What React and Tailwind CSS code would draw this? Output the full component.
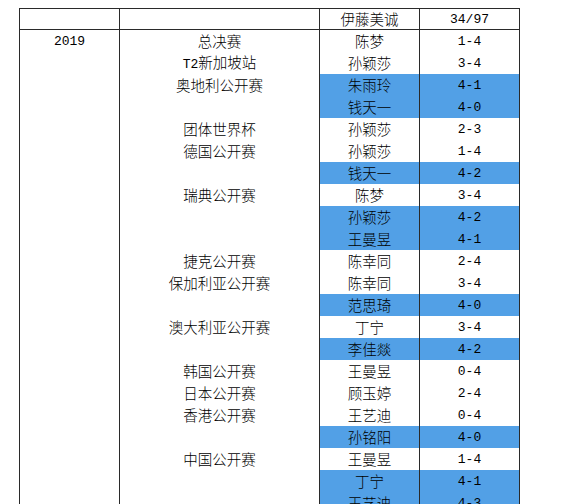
import React from "react";

const rows = [
  ["总决赛", "陈梦", "1-4", false],
  ["T2新加坡站", "孙颖莎", "3-4", false],
  ["奥地利公开赛", "朱雨玲", "4-1", true],
  ["", "钱天一", "4-0", true],
  ["团体世界杯", "孙颖莎", "2-3", false],
  ["德国公开赛", "孙颖莎", "1-4", false],
  ["", "钱天一", "4-2", true],
  ["瑞典公开赛", "陈梦", "3-4", false],
  ["", "孙颖莎", "4-2", true],
  ["", "王曼昱", "4-1", true],
  ["捷克公开赛", "陈幸同", "2-4", false],
  ["保加利亚公开赛", "陈幸同", "3-4", false],
  ["", "范思琦", "4-0", true],
  ["澳大利亚公开赛", "丁宁", "3-4", false],
  ["", "李佳燚", "4-2", true],
  ["韩国公开赛", "王曼昱", "0-4", false],
  ["日本公开赛", "顾玉婷", "2-4", false],
  ["香港公开赛", "王艺迪", "0-4", false],
  ["", "孙铭阳", "4-0", true],
  ["中国公开赛", "王曼昱", "1-4", false],
  ["", "丁宁", "4-1", true],
  ["", "王艺迪", "4-3", true],
];

const cjk = "font-['Noto_Sans_CJK_SC',sans-serif] text-[14.5px] font-light";
const mono = "font-['Liberation_Mono',monospace] text-[13px]";

function Event({ text }) {
  if (text.startsWith("T2")) {
    return (
      <span className="flex items-baseline">
        <span className={mono}>T2</span>
        <span className={cjk}>{text.slice(2)}</span>
      </span>
    );
  }
  return <span className={cjk}>{text}</span>;
}

export default function App() {
  return (
    <div className="w-[569px] h-[504px] overflow-hidden bg-white text-black pt-[8px] pl-[19px]">
      <div className="flex flex-col w-[501px]">
        <div className="flex h-[22px] border-t border-b border-[#2a2a2a]">
          <div className="w-[100px] border-l border-[#2a2a2a]" />
          <div className="w-[200px] border-l border-[#2a2a2a]" />
          <div className={`w-[100px] border-l border-[#2a2a2a] flex items-center justify-center leading-none ${cjk}`}>
            伊藤美诚
          </div>
          <div className={`w-[101px] border-l border-r border-[#2a2a2a] flex items-center justify-center leading-none ${mono}`}>
            34/97
          </div>
        </div>
        {rows.map(([ev, name, score, blue], i) => (
          <div key={i} className="flex h-[22px]">
            <div className={`w-[100px] border-l border-[#2a2a2a] flex items-center justify-center leading-none ${mono}`}>
              {i === 0 ? "2019" : ""}
            </div>
            <div className="w-[200px] border-l border-[#2a2a2a] flex items-center justify-center leading-none">
              {ev ? <Event text={ev} /> : null}
            </div>
            <div
              className={`w-[100px] border-l border-[#2a2a2a] flex items-center justify-center leading-none ${cjk} ${
                blue ? "bg-[#52a0e6]" : ""
              }`}
            >
              {name}
            </div>
            <div
              className={`w-[101px] border-l border-r border-[#2a2a2a] flex items-center justify-center leading-none ${mono} ${
                blue ? "bg-[#52a0e6]" : ""
              }`}
            >
              {score}
            </div>
          </div>
        ))}
      </div>
    </div>
  );
}
